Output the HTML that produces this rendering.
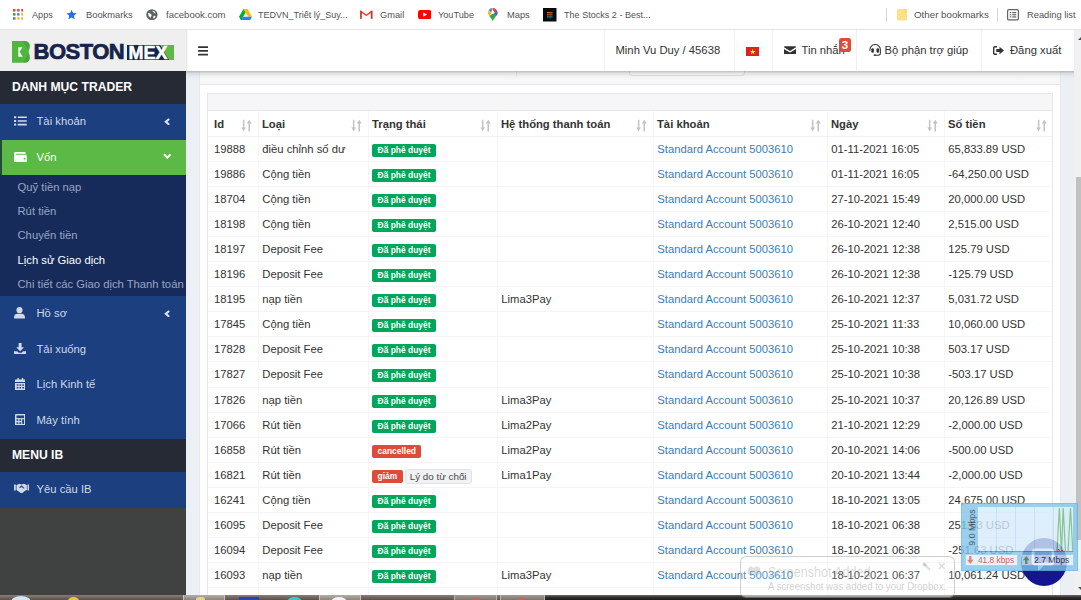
<!DOCTYPE html>
<html><head><meta charset="utf-8">
<style>
*{box-sizing:border-box;margin:0;padding:0}
html,body{width:1081px;height:600px;overflow:hidden;background:#ecf0f5;font-family:"Liberation Sans",sans-serif;font-size:11.25px;color:#222}
.abs{position:absolute}
/* bookmarks bar */
#bm{position:absolute;left:0;top:0;width:1081px;height:30px;background:#fff;border-bottom:1px solid #e4e4e4;font-size:9.8px;color:#505357}
#bm .t{position:absolute;top:7.7px;line-height:14px;white-space:nowrap;display:inline-block;transform-origin:0 50%}
#bm svg{position:absolute}
#bm .sep{position:absolute;top:8px;width:1px;height:14px;background:#d5d7da}
/* sidebar */
#side{position:absolute;left:0;top:30px;width:186px;height:565px;background:#404242}
#logo{position:absolute;left:0;top:0;width:186px;height:41px;background:#efefef}
.sec{position:absolute;left:0;width:186px;background:#252a34;color:#fff;font-weight:bold;font-size:12.15px;padding-left:12px}
.mi{position:absolute;left:0;width:186px;background:#1c3f80;color:#cfd8e8;font-size:11.25px;padding-left:36.5px}
.mi svg{position:absolute}
.mi.act{background:#5cb946;color:#fff;border-left:2px solid #1f4d3a;padding-left:34.5px}
#subm{position:absolute;left:0;top:145px;width:186px;height:121px;background:#172b5b}
.sub{position:absolute;left:17.5px;color:#97a5c3;font-size:11.25px;white-space:nowrap;line-height:14px}
.sub.on{color:#fff}
/* header */
#hdr{position:absolute;left:186px;top:30px;width:888px;height:41px;background:#fff;color:#333}
#hsh{position:absolute;left:186px;top:71px;width:888px;height:8px;background:linear-gradient(rgba(0,0,0,.24),rgba(0,0,0,.09) 30%,rgba(0,0,0,.025) 65%,rgba(0,0,0,0))}
#hshl{position:absolute;left:186px;top:30px;width:2px;height:41px;background:linear-gradient(90deg,rgba(0,0,0,.12),rgba(0,0,0,0))}
#hdr .vs{position:absolute;top:0;width:1px;height:41px;background:#f1f1f1}
#hdr .t{position:absolute;top:13px;line-height:14px;white-space:nowrap}
#hdr svg{position:absolute}
#scroll{position:absolute;left:1075px;top:30px;width:6px;height:565px;background:#f1f1f2}
/* cards */
#card1{position:absolute;left:199px;top:55px;width:862px;height:545px;background:#fff;border:1px solid #e8e9ec}
#card1h{position:absolute;left:0;top:0;width:860px;height:29px;background:#f7f7f8;border-bottom:1px solid #e5e6ea}
#card2{position:absolute;left:207px;top:93px;width:846px;height:510px;background:#fff;border:1px solid #e5e6ea}
#card2h{height:17px;background:#f6f6f7;border-bottom:1px solid #e5e6ea}
table{border-collapse:collapse;table-layout:fixed;width:844px;font-size:11.25px;color:#333}
th{height:25px;padding-top:1px !important;text-align:left;font-weight:bold;padding:0 0 0 3.5px;border-left:1px solid #f6f6f7;border-bottom:1px solid #f1f1f3;position:relative;white-space:nowrap}
td{height:25px;padding:0 0 0 3.8px;border-left:1px solid #f6f6f7;border-bottom:1px solid #f5f5f6;white-space:nowrap;overflow:hidden}
th:first-child,td:first-child{border-left:none;padding-left:6px}
tr.x td{height:26px}
td a{color:#3b7db7;text-decoration:none}
th svg{position:absolute;right:5.5px;top:7.5px}
.b{display:inline-block;background:#00a65a;color:#fff;font-weight:bold;font-size:8.44px;line-height:13px;height:13px;padding:0 5.3px;border-radius:2px;vertical-align:middle;position:relative;top:1.7px}
.b.r{background:#dd4b39}
.b.l{background:#f1f2f4;color:#4a4a4a;font-weight:normal;border:1px solid #e0e2e5;font-size:9.84px;height:15px;line-height:13px;padding:0 4px;border-radius:3px;margin-left:-1px;top:2px}
/* overlays */
#task{position:absolute;left:0;top:595px;width:1081px;height:5px;background:#2e2a28;overflow:hidden}
</style></head><body>
<div id="bm">
<svg style="left:12.8px;top:9.2px" width="10.7" height="10.7" viewBox="0 0 10.7 10.7"><rect x="0.0" y="0.0" width="2.5" height="2.5" fill="#e0483c"/><rect x="4.1" y="0.0" width="2.5" height="2.5" fill="#e0483c"/><rect x="8.2" y="0.0" width="2.5" height="2.5" fill="#e0483c"/><rect x="0.0" y="4.1" width="2.5" height="2.5" fill="#3a9a50"/><rect x="4.1" y="4.1" width="2.5" height="2.5" fill="#4a86e8"/><rect x="8.2" y="4.1" width="2.5" height="2.5" fill="#f0b428"/><rect x="0.0" y="8.2" width="2.5" height="2.5" fill="#3a9a50"/><rect x="4.1" y="8.2" width="2.5" height="2.5" fill="#f0c030"/><rect x="8.2" y="8.2" width="2.5" height="2.5" fill="#f0b428"/></svg>
<span class="t" style="left:31.5px;transform:scaleX(0.931)">Apps</span>
<svg style="left:66.3px;top:9.2px" width="11.2" height="11" viewBox="0 0 24 24" preserveAspectRatio="none"><path fill="#1a73e8" d="M12 1.5l3.2 7.2 7.8.8-5.9 5.2 1.7 7.7L12 18.4l-6.8 4 1.7-7.7L1 9.5l7.8-.8z"/></svg>
<span class="t" style="left:85.5px;transform:scaleX(0.953)">Bookmarks</span>
<svg style="left:146px;top:9px" width="11.8" height="11.4" viewBox="0 0 24 24" preserveAspectRatio="none"><circle cx="12" cy="12" r="11.5" fill="#5f6368"/><path fill="#fff" d="M4.500 8.500c1.800-.8 3.600 0 4.500 1.500s2.500 1.500 2.500 3.200-1.500 2.300-1.800 5c-3.200-1.200-6-4.800-5.200-9.700zM13.500 3c.8 1.500 0 3.200 1.700 4s1.800 2.500 4.300 2.500c-.3-3.200-2.800-5.800-6-6.500zM15.500 14.500c1.600-.8 3.200 0 4 .8-.8 2.400-2.400 4-4 4.800-.8-1.600-1.600-4 0-5.600z"/></svg>
<span class="t" style="left:165.5px;transform:scaleX(0.977)">facebook.com</span>
<svg style="left:239px;top:9px" width="13" height="11.3" viewBox="0 0 26 23" preserveAspectRatio="none"><path fill="#0066da" d="M2 20l2.300 3.900h17.400L24 20z" transform="translate(0,-1)"/><path fill="#00ac47" d="M9 0L0 15.600l4.300 7.300L13.300 7.300z"/><path fill="#ffba00" d="M17 0H9l9 15.600h8z"/><path fill="#2684fc" d="M4.300 22.900l4.300-7.300H26l-4.300 7.300z"/></svg>
<span class="t" style="left:258px;transform:scaleX(0.919)">TEDVN_Triết lý_Suy...</span>
<svg style="left:360px;top:10.3px" width="12.6" height="8.8" viewBox="0 0 26 19" preserveAspectRatio="none"><path fill="none" stroke="#e0483c" stroke-width="3" d="M2 19V3l11 8.500L24 3v16"/><path fill="#c5221f" d="M0 2h3.800v17H0zM22.200 2H26v17h-3.800z" opacity=".55"/></svg>
<span class="t" style="left:380px;transform:scaleX(0.946)">Gmail</span>
<svg style="left:417.5px;top:10px" width="13.3" height="9.200" viewBox="0 0 27 19" preserveAspectRatio="none"><rect width="27" height="19" rx="5" fill="#f00"/><path fill="#fff" d="M10.500 5l8 4.500-8 4.500z"/></svg>
<span class="t" style="left:437.5px;transform:scaleX(0.935)">YouTube</span>
<svg style="left:488px;top:8px" width="9.500" height="13.500" viewBox="0 0 19 27"><path fill="#ea4335" d="M9.500 0a9.500 9.500 0 0 1 9.500 9.500c0 2-.7 4-1.800 5.500L9.500 4z"/><path fill="#4285f4" d="M9.500 0C6 0 3 1.800 1.400 4.500l5 4.300z" transform="translate(0,0)"/><path fill="#fbbc04" d="M1.400 4.500C.5 6 0 7.700 0 9.500c0 2.500 1 4.500 2.500 6.500l5-6z"/><path fill="#34a853" d="M2.500 16c2.500 3.500 5.500 6 7 11 1.500-5 5-8.500 7.700-12L12 9.500z"/><path fill="#1a73e8" d="M17.200 15c1.100-1.500 1.800-3.500 1.800-5.500 0-1.500-.3-2.800-.9-4L11 13z" opacity=".9"/><circle cx="9.500" cy="9.500" r="2.600" fill="#fff"/></svg>
<span class="t" style="left:506.5px;transform:scaleX(0.951)">Maps</span>
<svg style="left:543px;top:8px" width="13.500" height="13.500" viewBox="0 0 27 27"><rect width="27" height="27" fill="#0b0b0b"/><rect x="8" y="8" width="11" height="2.500" fill="#b0682e"/><rect x="8" y="11.500" width="11" height="2.500" fill="#8e4a30"/><rect x="8" y="15" width="11" height="2.500" fill="#2a7f80"/><rect x="8" y="18.500" width="11" height="2" fill="#1f5a68"/></svg>
<span class="t" style="left:563.5px;transform:scaleX(0.925)">The Stocks 2 - Best...</span>
<div class="sep" style="left:886px"></div>
<svg style="left:896.5px;top:9px" width="10" height="11.500" viewBox="0 0 20 23"><path fill="#fbe28a" d="M0 1.500C0 .7.700 0 1.500 0h17c.8 0 1.500.7 1.500 1.500v20c0 .8-.7 1.500-1.500 1.500h-17C.7 23 0 22.300 0 21.500z"/><path fill="#f6d365" d="M13 0h5.500c.8 0 1.500.7 1.500 1.500V7h-7z" opacity=".6"/></svg>
<span class="t" style="left:914px;transform:scaleX(0.995)">Other bookmarks</span>
<div class="sep" style="left:997px"></div>
<svg style="left:1007px;top:9px" width="12" height="11.500" viewBox="0 0 24 23"><rect x="1.200" y="1.200" width="21.600" height="20.600" rx="2.500" fill="none" stroke="#5f6368" stroke-width="2.400"/><g fill="#5f6368"><rect x="5.500" y="6" width="3" height="2.400"/><rect x="10.500" y="6" width="8" height="2.400"/><rect x="5.500" y="10.300" width="3" height="2.400"/><rect x="10.500" y="10.300" width="8" height="2.400"/><rect x="5.500" y="14.600" width="3" height="2.400"/><rect x="10.500" y="14.600" width="8" height="2.400"/></g></svg>
<span class="t" style="left:1026.5px;transform:scaleX(0.949)">Reading list</span>
</div>

<div id="card1"><div id="card1h"></div></div>
<div id="card2"><div id="card2h"></div>
<table id="t"><colgroup><col style="width:50px"><col style="width:110px"><col style="width:129px"><col style="width:156px"><col style="width:174px"><col style="width:117px"><col style="width:108px"></colgroup>
<thead><tr><th>Id<svg width="11" height="13" viewBox="0 0 11 13"><g fill="#c2c2c2"><rect x="1.900" y="0.800" width="1.500" height="9"/><path d="M0.400 8.600h4.500l-2.250 3.600z"/><rect x="7.500" y="3" width="1.500" height="9.500"/><path d="M5.800 4.400h4.900l-2.450-3.600z"/></g></svg></th><th>Loại<svg width="11" height="13" viewBox="0 0 11 13"><g fill="#c2c2c2"><rect x="1.900" y="0.800" width="1.500" height="9"/><path d="M0.400 8.600h4.500l-2.250 3.600z"/><rect x="7.500" y="3" width="1.500" height="9.500"/><path d="M5.800 4.400h4.900l-2.450-3.600z"/></g></svg></th><th>Trạng thái<svg width="11" height="13" viewBox="0 0 11 13"><g fill="#c2c2c2"><rect x="1.900" y="0.800" width="1.500" height="9"/><path d="M0.400 8.600h4.500l-2.250 3.600z"/><rect x="7.500" y="3" width="1.500" height="9.500"/><path d="M5.800 4.400h4.900l-2.450-3.600z"/></g></svg></th><th>Hệ thống thanh toán<svg width="11" height="13" viewBox="0 0 11 13"><g fill="#c2c2c2"><rect x="1.900" y="0.800" width="1.500" height="9"/><path d="M0.400 8.600h4.500l-2.250 3.600z"/><rect x="7.500" y="3" width="1.500" height="9.500"/><path d="M5.800 4.400h4.900l-2.450-3.600z"/></g></svg></th><th>Tài khoản<svg width="11" height="13" viewBox="0 0 11 13"><g fill="#c2c2c2"><rect x="1.900" y="0.800" width="1.500" height="9"/><path d="M0.400 8.600h4.500l-2.250 3.600z"/><rect x="7.500" y="3" width="1.500" height="9.500"/><path d="M5.800 4.400h4.900l-2.450-3.600z"/></g></svg></th><th>Ngày<svg width="11" height="13" viewBox="0 0 11 13"><g fill="#c2c2c2"><rect x="1.900" y="0.800" width="1.500" height="9"/><path d="M0.400 8.600h4.500l-2.250 3.600z"/><rect x="7.500" y="3" width="1.500" height="9.500"/><path d="M5.800 4.400h4.900l-2.450-3.600z"/></g></svg></th><th>Số tiền<svg width="11" height="13" viewBox="0 0 11 13"><g fill="#c2c2c2"><rect x="1.900" y="0.800" width="1.500" height="9"/><path d="M0.400 8.600h4.500l-2.250 3.600z"/><rect x="7.500" y="3" width="1.500" height="9.500"/><path d="M5.800 4.400h4.900l-2.450-3.600z"/></g></svg></th></tr></thead>
<tbody>
<tr><td>19888</td><td>điều chỉnh số dư</td><td><span class="b">Đã phê duyệt</span></td><td></td><td><a>Standard Account 5003610</a></td><td>01-11-2021 16:05</td><td>65,833.89 USD</td></tr>
<tr><td>19886</td><td>Cộng tiền</td><td><span class="b">Đã phê duyệt</span></td><td></td><td><a>Standard Account 5003610</a></td><td>01-11-2021 16:05</td><td>-64,250.00 USD</td></tr>
<tr><td>18704</td><td>Cộng tiền</td><td><span class="b">Đã phê duyệt</span></td><td></td><td><a>Standard Account 5003610</a></td><td>27-10-2021 15:49</td><td>20,000.00 USD</td></tr>
<tr><td>18198</td><td>Cộng tiền</td><td><span class="b">Đã phê duyệt</span></td><td></td><td><a>Standard Account 5003610</a></td><td>26-10-2021 12:40</td><td>2,515.00 USD</td></tr>
<tr><td>18197</td><td>Deposit Fee</td><td><span class="b">Đã phê duyệt</span></td><td></td><td><a>Standard Account 5003610</a></td><td>26-10-2021 12:38</td><td>125.79 USD</td></tr>
<tr><td>18196</td><td>Deposit Fee</td><td><span class="b">Đã phê duyệt</span></td><td></td><td><a>Standard Account 5003610</a></td><td>26-10-2021 12:38</td><td>-125.79 USD</td></tr>
<tr><td>18195</td><td>nạp tiền</td><td><span class="b">Đã phê duyệt</span></td><td>Lima3Pay</td><td><a>Standard Account 5003610</a></td><td>26-10-2021 12:37</td><td>5,031.72 USD</td></tr>
<tr><td>17845</td><td>Cộng tiền</td><td><span class="b">Đã phê duyệt</span></td><td></td><td><a>Standard Account 5003610</a></td><td>25-10-2021 11:33</td><td>10,060.00 USD</td></tr>
<tr><td>17828</td><td>Deposit Fee</td><td><span class="b">Đã phê duyệt</span></td><td></td><td><a>Standard Account 5003610</a></td><td>25-10-2021 10:38</td><td>503.17 USD</td></tr>
<tr class="x"><td>17827</td><td>Deposit Fee</td><td><span class="b">Đã phê duyệt</span></td><td></td><td><a>Standard Account 5003610</a></td><td>25-10-2021 10:38</td><td>-503.17 USD</td></tr>
<tr><td>17826</td><td>nạp tiền</td><td><span class="b">Đã phê duyệt</span></td><td>Lima3Pay</td><td><a>Standard Account 5003610</a></td><td>25-10-2021 10:37</td><td>20,126.89 USD</td></tr>
<tr><td>17066</td><td>Rút tiền</td><td><span class="b">Đã phê duyệt</span></td><td>Lima2Pay</td><td><a>Standard Account 5003610</a></td><td>21-10-2021 12:29</td><td>-2,000.00 USD</td></tr>
<tr><td>16858</td><td>Rút tiền</td><td><span class="b r">cancelled</span></td><td>Lima2Pay</td><td><a>Standard Account 5003610</a></td><td>20-10-2021 14:06</td><td>-500.00 USD</td></tr>
<tr><td>16821</td><td>Rút tiền</td><td><span class="b r">giảm</span> <span class="b l">Lý do từ chối</span></td><td>Lima1Pay</td><td><a>Standard Account 5003610</a></td><td>20-10-2021 13:44</td><td>-2,000.00 USD</td></tr>
<tr><td>16241</td><td>Cộng tiền</td><td><span class="b">Đã phê duyệt</span></td><td></td><td><a>Standard Account 5003610</a></td><td>18-10-2021 13:05</td><td>24,675.00 USD</td></tr>
<tr><td>16095</td><td>Deposit Fee</td><td><span class="b">Đã phê duyệt</span></td><td></td><td><a>Standard Account 5003610</a></td><td>18-10-2021 06:38</td><td>251.63 USD</td></tr>
<tr><td>16094</td><td>Deposit Fee</td><td><span class="b">Đã phê duyệt</span></td><td></td><td><a>Standard Account 5003610</a></td><td>18-10-2021 06:38</td><td>-251.63 USD</td></tr>
<tr><td>16093</td><td>nạp tiền</td><td><span class="b">Đã phê duyệt</span></td><td>Lima3Pay</td><td><a>Standard Account 5003610</a></td><td>18-10-2021 06:37</td><td>10,061.24 USD</td></tr>
<tr><td>16092</td><td>Cộng tiền</td><td><span class="b">Đã phê duyệt</span></td><td></td><td><a>Standard Account 5003610</a></td><td>18-10-2021 06:30</td><td>1,000.00 USD</td></tr>
</tbody></table></div>
<div class="abs" style="left:516px;top:66px;width:1px;height:11px;background:#e6e6e8"></div><div class="abs" style="left:628.5px;top:60px;width:116px;height:15.5px;border:1px solid #e0e1e4;border-radius:3px;background:#fbfbfb"></div>
<div id="hsh"></div>
<div id="hdr">
<svg style="left:11.8px;top:15.7px" width="10.500" height="10" viewBox="0 0 21 20"><g fill="#333"><rect y="0.500" width="21" height="3.600" rx=".8"/><rect y="8" width="21" height="3.600" rx=".8"/><rect y="15.500" width="21" height="3.600" rx=".8"/></g></svg>
<div class="vs" style="left:418px"></div>
<span class="t" style="left:429.5px">Minh Vu Duy / 45638</span>
<div class="vs" style="left:547.5px"></div>
<svg style="left:559.5px;top:16.5px" width="13.500" height="9.500" viewBox="0 0 27 19"><rect width="27" height="19" fill="#da251d"/><path fill="#ff0" d="M13.500 3.800l1.350 4.100h4.350l-3.500 2.550 1.330 4.130-3.530-2.560-3.530 2.560 1.330-4.130-3.500-2.550h4.350z"/></svg>
<div class="vs" style="left:585.5px"></div>
<svg style="left:597.5px;top:15.5px" width="12" height="8.800" viewBox="0 0 24 17"><path fill="#333" d="M2 0h20c1.100 0 2 .9 2 2v.3L12 9.500 0 2.300V2C0 .9.900 0 2 0zM0 5.600l12 7.300 12-7.300V15c0 1.100-.9 2-2 2H2c-1.100 0-2-.9-2-2z"/></svg>
<span class="t" style="left:615.5px">Tin nhắn</span>
<div class="abs" style="left:653px;top:7.5px;width:12px;height:14.5px;background:#dd4b39;border-radius:2.5px;color:#fff;font-weight:bold;font-size:11.5px;line-height:14.5px;text-align:center">3</div>
<div class="vs" style="left:670px"></div>
<svg style="left:683px;top:14px" width="12.500" height="12.500" viewBox="0 0 25 25"><path fill="none" stroke="#333" stroke-width="2.100" stroke-linecap="round" d="M1.800 12.500V11.500a10.500 10.500 0 0 1 21 0V18a4.500 4.500 0 0 1-4.500 4.500H12"/><rect x="4.600" y="8.300" width="5.200" height="9" rx="2.400" fill="#333"/><rect x="15" y="8.300" width="5.200" height="9" rx="2.400" fill="#333"/><ellipse cx="11.500" cy="22" rx="2.500" ry="1.700" fill="#333"/></svg>
<span class="t" style="left:698.5px">Bộ phận trợ giúp</span>
<div class="vs" style="left:794.5px"></div>
<svg style="left:807px;top:16px" width="11" height="9" viewBox="0 0 22 18"><path fill="none" stroke="#333" stroke-width="2.800" d="M8 1.400H4a2.600 2.600 0 0 0-2.600 2.600v10A2.600 2.600 0 0 0 4 16.600h4"/><path fill="#333" d="M13 1.500l9 7.500-9 7.500V12H6.500V6H13z"/></svg>
<span class="t" style="left:824px">Đăng xuất</span>
</div>

<div id="hshl"></div>
<div id="side">
<div id="logo">
<svg class="abs" style="left:12px;top:11px" width="18" height="21.700" viewBox="0 0 36 43" preserveAspectRatio="none"><path fill="#52b540" d="M0 0H24Q34 0 35.300 8Q36 15 33.200 21.500Q36 28 35.300 35Q34 43 24 43H0z"/><path fill="#3a9a32" d="M21 0h3q10 0 11.300 8 .5 5-1.300 9.500z" opacity=".55"/><path fill="#3a9a32" d="M23 43h1q10 0 11.300-8 .5-5-1.800-10z" opacity=".55"/><path fill="#f6faf4" d="M12.600 12.500H21l-5.800 9 6.300 9.500H12.600z"/></svg>
<span class="abs" style="left:33.5px;top:10px;font-size:22px;line-height:24px;font-weight:bold;color:#16244a;letter-spacing:-0.5px;-webkit-text-stroke:0.7px #16244a">BOSTON</span>
<svg class="abs" style="left:127px;top:15px" width="47" height="15" viewBox="0 0 94 30"><rect width="94" height="30" fill="#16244a"/><path fill="#5cb946" d="M66 0h28v30H84z"/></svg>
<span class="abs" style="left:128.5px;top:13px;font-size:18px;line-height:21px;font-weight:bold;color:#fff;letter-spacing:0;-webkit-text-stroke:0.5px #fff">MEX</span>
</div>
<div class="sec" style="top:41px;height:33px;line-height:33px">DANH MỤC TRADER</div>
<div class="mi" style="top:74px;height:36px;line-height:35px">Tài khoản
<svg style="left:14px;top:12.3px" width="12.800" height="9.800" viewBox="0 0 26 21" preserveAspectRatio="none"><g fill="#d3dae7"><rect x="0" y="0.500" width="4.500" height="4.200" rx=".8"/><rect x="7.500" y="1" width="18.500" height="3.400" rx=".8"/><rect x="0" y="8.400" width="4.500" height="4.200" rx=".8"/><rect x="7.500" y="8.900" width="18.500" height="3.400" rx=".8"/><rect x="0" y="16.300" width="4.500" height="4.200" rx=".8"/><rect x="7.500" y="16.800" width="18.500" height="3.400" rx=".8"/></g></svg>
<svg style="left:163.8px;top:13.7px" width="6.200" height="7.600" viewBox="0 0 12 16" preserveAspectRatio="none"><path fill="none" stroke="#dfe5f0" stroke-width="4.200" d="M10 2L3.500 8l6.500 6"/></svg>
</div>
<div class="mi act" style="top:110px;height:35.5px;line-height:35px">Vốn
<svg style="left:12px;top:11.5px" width="12.800" height="10.600" viewBox="0 0 26 23" preserveAspectRatio="none"><path fill="#fff" d="M3 0h18.500c1.400 0 2.500 1.100 2.500 2.500V4H4.500c-.6 0-1 .4-1 1s.4 1 1 1H23c1.700 0 3 1.300 3 3v11c0 1.700-1.300 3-3 3H3.500C1.600 23 0 21.400 0 19.500V3c0-1.700 1.300-3 3-3zm18.500 12.500a2 2 0 1 0 0 4 2 2 0 0 0 0-4z"/></svg>
<svg style="left:160.8px;top:13.2px" width="8.600" height="6.200" viewBox="0 0 17 12" preserveAspectRatio="none"><path fill="none" stroke="#fff" stroke-width="4" d="M2 2.500l6.500 6.500L15 2.500"/></svg>
</div>
<div id="subm">
<span class="sub" style="top:4.5px">Quỹ tiền nạp</span>
<span class="sub" style="top:28.8px">Rút tiền</span>
<span class="sub" style="top:53.2px">Chuyển tiền</span>
<span class="sub on" style="top:77.5px">Lịch sử Giao dịch</span>
<span class="sub" style="top:101.8px">Chi tiết các Giao dịch Thanh toán</span>
</div>
<div class="mi" style="top:266px;height:35.5px;line-height:35.5px">Hồ sơ
<svg style="left:14.2px;top:11.3px" width="11" height="11.600" viewBox="0 0 23 24" preserveAspectRatio="none"><circle cx="11.500" cy="6.500" r="6.300" fill="#d3dae7"/><path fill="#d3dae7" d="M0 22c0-5 3-8 7-8h9c4 0 7 3 7 8 0 1.200-.8 2-2 2H2c-1.200 0-2-.8-2-2z"/></svg>
<svg style="left:163.8px;top:13.7px" width="6.200" height="7.600" viewBox="0 0 12 16" preserveAspectRatio="none"><path fill="none" stroke="#dfe5f0" stroke-width="4.200" d="M10 2L3.500 8l6.500 6"/></svg>
</div>
<div class="mi" style="top:301.5px;height:35.5px;line-height:35.5px">Tải xuống
<svg style="left:14.2px;top:11.4px" width="12.200" height="11.400" viewBox="0 0 25 24" preserveAspectRatio="none"><path fill="#d3dae7" d="M9.500 0h6v9h5l-8 8.500L4.500 9h5zM0 17.500h6.500l3 3h6l3-3H25V24H0z"/></svg>
</div>
<div class="mi" style="top:337px;height:35.5px;line-height:35.5px">Lịch Kinh tế
<svg style="left:14.6px;top:11.2px" width="10.600" height="12.200" viewBox="0 0 22 25" preserveAspectRatio="none"><path fill="#d3dae7" d="M5 0h3v3h6V0h3v3h3c1.100 0 2 .9 2 2v3H0V5c0-1.100.9-2 2-2h3zM0 10h22v13c0 1.100-.9 2-2 2H2c-1.100 0-2-.9-2-2z"/><g fill="#1c3f80"><rect x="3.500" y="13" width="3.500" height="3"/><rect x="9.200" y="13" width="3.500" height="3"/><rect x="15" y="13" width="3.500" height="3"/><rect x="3.500" y="18.500" width="3.500" height="3"/><rect x="9.200" y="18.500" width="3.500" height="3"/><rect x="15" y="18.500" width="3.500" height="3"/></g></svg>
</div>
<div class="mi" style="top:372.5px;height:36px;line-height:35.5px">Máy tính
<svg style="left:14.5px;top:11.2px" width="10.500" height="11.600" viewBox="0 0 21 24" preserveAspectRatio="none"><path fill="#d3dae7" d="M2.500 0h16C19.900 0 21 1.100 21 2.500v19c0 1.400-1.100 2.500-2.500 2.500h-16C1.100 24 0 22.900 0 21.500v-19C0 1.100 1.100 0 2.500 0z"/><g fill="#1c3f80"><rect x="3" y="3" width="15" height="5.500"/><rect x="3" y="11" width="3.600" height="3.200"/><rect x="8.700" y="11" width="3.600" height="3.200"/><rect x="14.400" y="11" width="3.600" height="9.500"/><rect x="3" y="17.200" width="3.600" height="3.200"/><rect x="8.700" y="17.200" width="3.600" height="3.200"/></g></svg>
</div>
<div class="sec" style="top:408.5px;height:33.5px;line-height:33px">MENU IB</div>
<div class="mi" style="top:442px;height:35.5px;line-height:35px">Yêu cầu IB
<svg style="left:14.2px;top:11.3px" width="15.300" height="10" viewBox="0 0 31 20"><g fill="#d3dae7"><rect x="0" y="3" width="3.600" height="12" rx=".6"/><rect x="27.400" y="3" width="3.600" height="12" rx=".6"/><path d="M5 4l6-2.500 4.500 1.200L20 1.500 26 4v10l-3.500 1.500-5 4c-1.500 1-3 1-4.500 0L7 15.500 5 14z"/></g><path fill="#1c3f80" d="M11.500 7.500l4-3 6 5.500-1.500 1.500-4.500-3.500-2.500 2c-1.500 1-3-1-1.500-2.500z" opacity=".9"/></svg>
</div>
</div>

<div id="scroll"><div class="abs" style="left:0.5px;top:147px;width:6px;height:363px;background:#c1c1c1"></div><svg class="abs" style="left:2.5px;top:6px" width="8" height="4" viewBox="0 0 8 4"><path fill="#505050" d="M0 4l4-4 4 4z"/></svg><svg class="abs" style="left:2.5px;top:556.5px" width="8" height="4" viewBox="0 0 8 4"><path fill="#505050" d="M0 0l4 4 4-4z"/></svg></div>
<div class="abs" style="left:1020.5px;top:537.5px;width:46px;height:48px;border-radius:50%;background:#15158f"></div>
<svg class="abs" style="left:1031px;top:548px" width="24" height="22" viewBox="0 0 24 22"><path fill="none" stroke="#f4f6ff" stroke-width="2.800" d="M4.500 2h15a2.500 2.500 0 0 1 2.500 2.500v9a2.500 2.500 0 0 1-2.500 2.500H12l-3.500 4v-4h-4A2.500 2.500 0 0 1 2 13.500v-9A2.500 2.500 0 0 1 4.500 2z"/></svg>
<div class="abs" id="net" style="left:960.5px;top:502.5px;width:117px;height:68px;opacity:.8;background:rgb(130,196,234);border:1px solid rgb(105,178,224)">
<div class="abs" style="left:16px;top:3px;width:95px;height:45.5px;background:rgb(214,236,251);border-bottom:1px solid rgb(95,135,175);overflow:hidden">
<svg class="abs" style="left:-1px;top:0" width="96" height="45" viewBox="0 0 96 45"><g stroke="rgb(186,218,240)" stroke-width="1"><path d="M19.500 0v45M38.500 0v45M57.500 0v45M76.500 0v45"/></g><path fill="none" stroke="#6cba74" stroke-width="1.200" d="M80 45l2.300-44 2.200 44 1.700-44 2.300 44M91 45l2.500-44 2.300 44"/><path fill="none" stroke="#d9534f" stroke-width="1" d="M80 45l1.500-3 1.500 3 2-2 2 2"/></svg>
</div>
<span class="abs" style="left:-11px;top:18.5px;width:40px;font-size:9.5px;line-height:11px;color:#1f3347;transform:rotate(-90deg) scaleX(.93);white-space:nowrap;text-align:center">9.0 Mbps</span>
<div class="abs" style="left:3.5px;top:50.5px;width:53px;height:12px;background:rgb(226,241,251);border:1px solid rgb(150,200,232);font-size:9.5px;line-height:10px;color:#c73a34;white-space:nowrap"><svg class="abs" style="left:1px;top:1px" width="6.500" height="8" viewBox="0 0 14 17"><path fill="#e0605a" d="M4.500 0h5v8H14l-7 9-7-9h4.500z"/></svg><span class="abs" style="left:11.5px;top:0;transform:scaleX(.875);transform-origin:0 50%">41.8 kbps</span></div>
<div class="abs" style="left:59px;top:50.5px;width:53.5px;height:12px;background:rgb(226,241,251);border:1px solid rgb(150,200,232);font-size:9.5px;line-height:10px;color:#1f3347;white-space:nowrap"><svg class="abs" style="left:1.5px;top:1px" width="6.500" height="8" viewBox="0 0 14 17"><path fill="#5cae62" d="M4.500 17h5V9H14L7 0 0 9h4.500z"/></svg><span class="abs" style="left:12.5px;top:0;transform:scaleX(.9);transform-origin:0 50%">2.7 Mbps</span></div>
</div>

<div id="task">
<div class="abs" style="left:0;top:0;width:545px;height:5px;background:linear-gradient(#8a7f77,#5a4f49)"></div>
<div class="abs" style="left:545px;top:0;width:536px;height:5px;background:linear-gradient(#6e6866,#2a2727 55%,#1f1d1d)"></div>
<div class="abs" style="left:11px;top:1px;width:20px;height:12px;border-radius:50%;background:#d4e4f0"></div>
<div class="abs" style="left:68px;top:2px;width:11px;height:8px;border-radius:50%;background:#e9c83c"></div>
<div class="abs" style="left:183px;top:0;width:42px;height:5px;background:linear-gradient(#b5ada4,#8d857c);border-left:1px solid #c9c2ba;border-right:1px solid #c9c2ba"></div>
<div class="abs" style="left:196px;top:2px;width:9px;height:6px;border-radius:40%;background:#e6d67e"></div>
<div class="abs" style="left:239px;top:1.5px;width:20px;height:5px;background:#2647ad"></div>
<div class="abs" style="left:287px;top:1.5px;width:15px;height:10px;border-radius:50%;background:#3ec4cc"></div>
<div class="abs" style="left:318.5px;top:0;width:42px;height:5px;background:linear-gradient(#b5ada4,#8d857c);border-left:1px solid #c9c2ba;border-right:1px solid #c9c2ba"></div>
<div class="abs" style="left:331px;top:1.5px;width:16px;height:10px;border-radius:50%;background:#f2f2f4"></div>
<div class="abs" style="left:454px;top:0;width:43px;height:5px;background:linear-gradient(#a39a93,#7d746e);border-left:1px solid #bdb5ae;border-right:1px solid #bdb5ae"></div>
<div class="abs" style="left:472px;top:3px;width:9px;height:6px;border-radius:50%;background:#c9605a"></div>
<div class="abs" style="left:500px;top:0;width:45px;height:5px;background:linear-gradient(#a39a93,#7d746e);border-left:1px solid #bdb5ae;border-right:1px solid #bdb5ae"></div>
<div class="abs" style="left:517px;top:3px;width:9px;height:6px;border-radius:50%;background:#c9605a"></div>
</div>
<div class="abs" id="toast" style="left:740px;top:556px;width:214.5px;height:41.5px;border:1px solid rgba(140,140,140,.42);border-radius:6px;background:rgba(255,255,255,.16);overflow:hidden">
<svg class="abs" style="left:7px;top:9px" width="12" height="10" viewBox="0 0 12 10"><path fill="rgba(150,150,150,.3)" d="M0 2l3-2 3 2 3-2 3 2v6l-3 2-3-2-3 2-3-2z"/></svg>
<span class="abs" style="left:27px;top:4.5px;font-size:15px;line-height:20px;color:rgba(140,140,140,.34);white-space:nowrap;transform:scaleX(.835);transform-origin:0 50%">Screenshot Added</span>
<span class="abs" style="left:27px;top:21.5px;font-size:11px;line-height:14px;color:rgba(140,140,140,.4);white-space:nowrap;transform:scaleX(.872);transform-origin:0 50%">A screenshot was added to your Dropbox.</span>
<svg class="abs" style="left:181px;top:5px" width="10" height="10" viewBox="0 0 10 10"><path fill="none" stroke="rgba(140,140,140,.3)" stroke-width="1.800" d="M2 2l6 6"/><circle cx="2.500" cy="2.500" r="2" fill="rgba(140,140,140,.3)"/></svg>
<span class="abs" style="left:196px;top:2.5px;font-size:11px;color:rgba(140,140,140,.35)">✕</span>
<div class="abs" style="left:0;top:38px;width:215px;height:4px;background:rgba(255,255,255,.42)"></div>
</div>

</body></html>
